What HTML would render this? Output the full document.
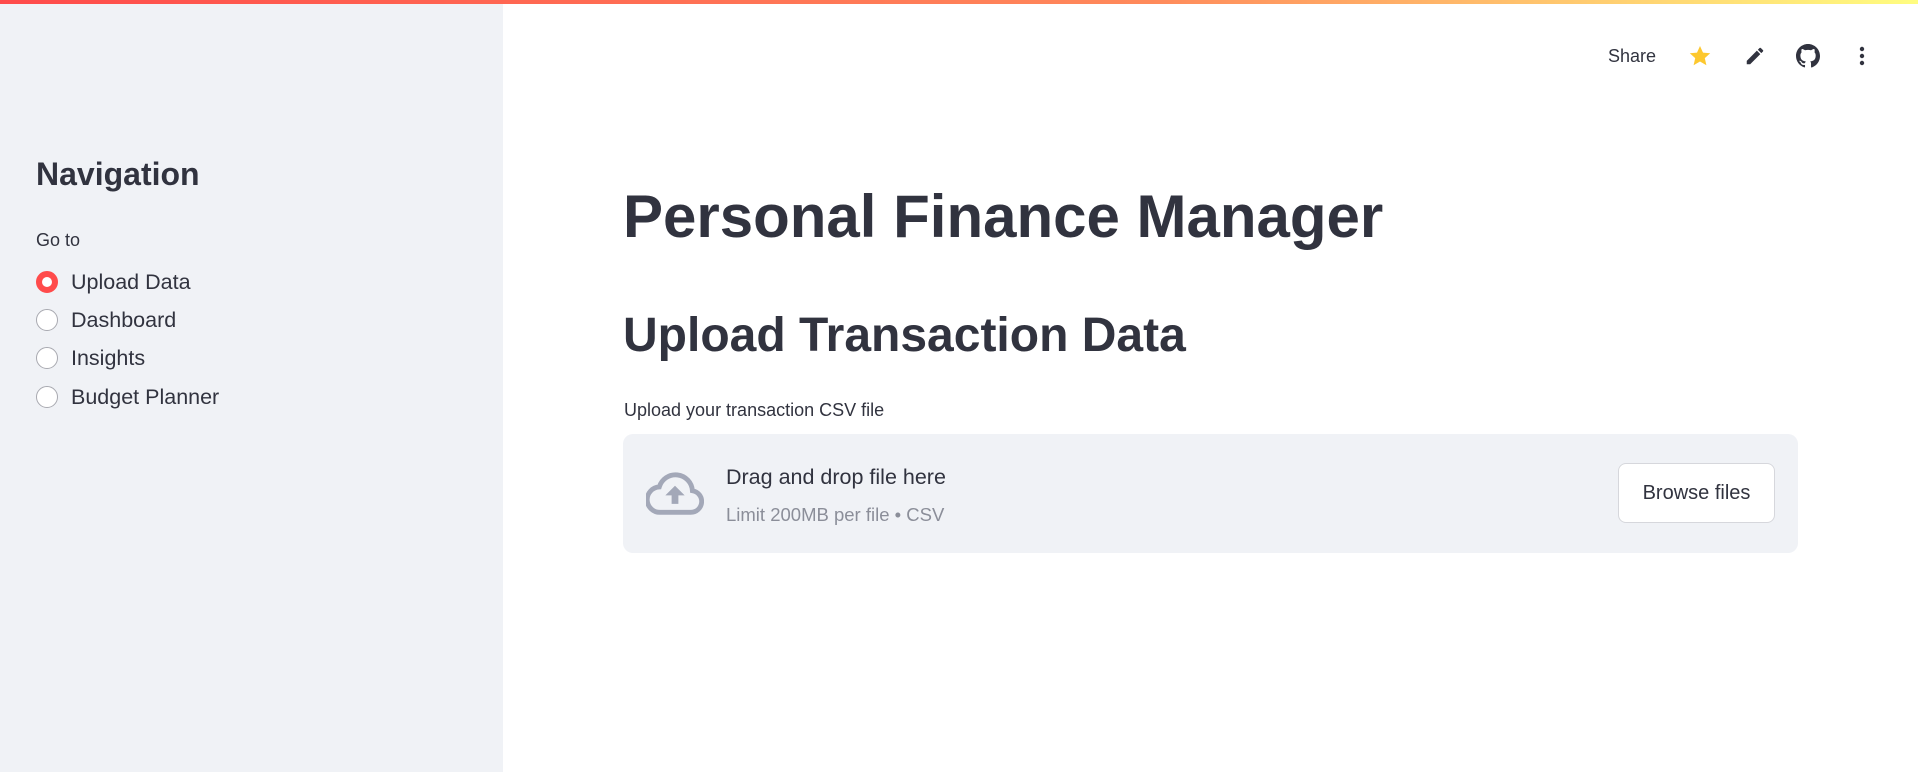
<!DOCTYPE html>
<html><head><meta charset="utf-8"><style>
*{margin:0;padding:0;box-sizing:border-box}
body{width:1918px;height:772px;overflow:hidden;background:#fff;font-family:"Liberation Sans",sans-serif;color:#31333f;position:relative}
.bar{position:absolute;top:0;left:0;width:1918px;height:4px;background:linear-gradient(90deg,#ff4b4b,#ff8a5b 60%,#fffd80)}
.side{position:absolute;top:4px;left:0;width:503px;height:768px;background:#f0f2f6}
.abs{position:absolute;white-space:nowrap}
.radio{position:absolute;left:36px;width:22px;height:22px;border-radius:50%;border:1.5px solid #a8a9b0;background:#fff}
.radio.on{background:#fff;border:6px solid #ff4b4b}
.rl{position:absolute;left:71px;font-size:21.5px;line-height:24px}
</style></head><body>
<div class="bar"></div>
<div class="side">
<div class="abs" style="left:36px;top:152px;font-size:32px;font-weight:bold;line-height:36px">Navigation</div>
<div class="abs" style="left:36px;top:226px;font-size:18px;line-height:20px">Go to</div>
<div class="radio on" style="top:267px"></div><div class="rl" style="top:266px">Upload Data</div>
<div class="radio" style="top:305px"></div><div class="rl" style="top:304px">Dashboard</div>
<div class="radio" style="top:343px"></div><div class="rl" style="top:342px">Insights</div>
<div class="radio" style="top:382px"></div><div class="rl" style="top:381px">Budget Planner</div>
</div>
<div class="abs" style="left:1608px;top:45px;font-size:18px;line-height:22px">Share</div>
<svg class="abs" style="left:1688px;top:44px" width="24" height="24" viewBox="0 0 24 24"><path fill="#fdc82f" d="M12 2l3 6.6 7.2.7-5.4 4.8 1.6 7.1L12 17.5 5.6 21.2l1.6-7.1L1.8 9.3 9 8.6z"/></svg>
<svg class="abs" style="left:1744px;top:45px" width="22" height="22" viewBox="0 0 24 24"><path fill="#31333f" d="M3 17.25V21h3.75L17.8 9.94l-3.75-3.75L3 17.25zM20.7 7.04a1 1 0 000-1.41l-2.34-2.34a1 1 0 00-1.41 0l-1.83 1.83 3.75 3.75 1.83-1.83z"/></svg>
<svg class="abs" style="left:1796px;top:44px" width="24" height="24" viewBox="0 0 16 16"><path fill="#31333f" d="M8 0C3.58 0 0 3.58 0 8c0 3.54 2.290 6.53 5.47 7.59.4.07.55-.17.55-.38v-1.33c-2.23.48-2.7-1.07-2.7-1.07-.36-.92-.89-1.170-.89-1.17-.73-.5.06-.49.06-.49.8.06 1.23.83 1.23.83.72 1.23 1.88.87 2.34.67.07-.52.28-.87.51-1.07-1.78-.2-3.64-.89-3.64-3.95 0-.87.31-1.59.82-2.15-.08-.2-.36-1.02.08-2.12 0 0 .67-.21 2.2.82a7.6 7.6 0 014 0c1.530-1.04 2.2-.82 2.2-.82.44 1.1.16 1.92.08 2.12.51.56.82 1.27.82 2.15 0 3.07-1.87 3.75-3.65 3.95.29.25.54.73.54 1.48v2.2c0 .21.15.46.55.38A8.01 8.01 0 0016 8c0-4.42-3.58-8-8-8z"/></svg>
<svg class="abs" style="left:1850px;top:44px" width="24" height="24" viewBox="0 0 24 24"><circle cx="12" cy="5" r="2.2" fill="#31333f"/><circle cx="12" cy="12" r="2.2" fill="#31333f"/><circle cx="12" cy="19" r="2.2" fill="#31333f"/></svg>
<div class="abs" style="left:623px;top:182px;font-size:60px;font-weight:bold;line-height:70px">Personal Finance Manager</div>
<div class="abs" style="left:623px;top:308px;font-size:48px;font-weight:bold;line-height:56px">Upload Transaction Data</div>
<div class="abs" style="left:624px;top:399px;font-size:18px;line-height:22px">Upload your transaction CSV file</div>
<div class="abs" style="left:623px;top:434px;width:1175px;height:119px;background:#f0f2f6;border-radius:10px"></div>
<svg class="abs" style="left:646px;top:470px" width="58" height="46" viewBox="0 0 24 19"><path fill="none" stroke="#a3a8b8" stroke-width="2" d="M6 17.5h12.5a4.5 4.5 0 00.7-8.95A7 7 0 005.5 7a5.25 5.25 0 00.5 10.5z"/><path fill="#a3a8b8" d="M12 6.5l-4 4h2.6v3.5h2.8v-3.5H16z"/></svg>
<div class="abs" style="left:726px;top:464px;font-size:21.5px;line-height:26px">Drag and drop file here</div>
<div class="abs" style="left:726px;top:504px;font-size:18.5px;line-height:22px;color:#8b8e99">Limit 200MB per file • CSV</div>
<div class="abs" style="left:1618px;top:463px;width:157px;height:60px;background:#fff;border:1px solid #d6d7dc;border-radius:8px;font-size:20px;line-height:58px;text-align:center">Browse files</div>
</body></html>
